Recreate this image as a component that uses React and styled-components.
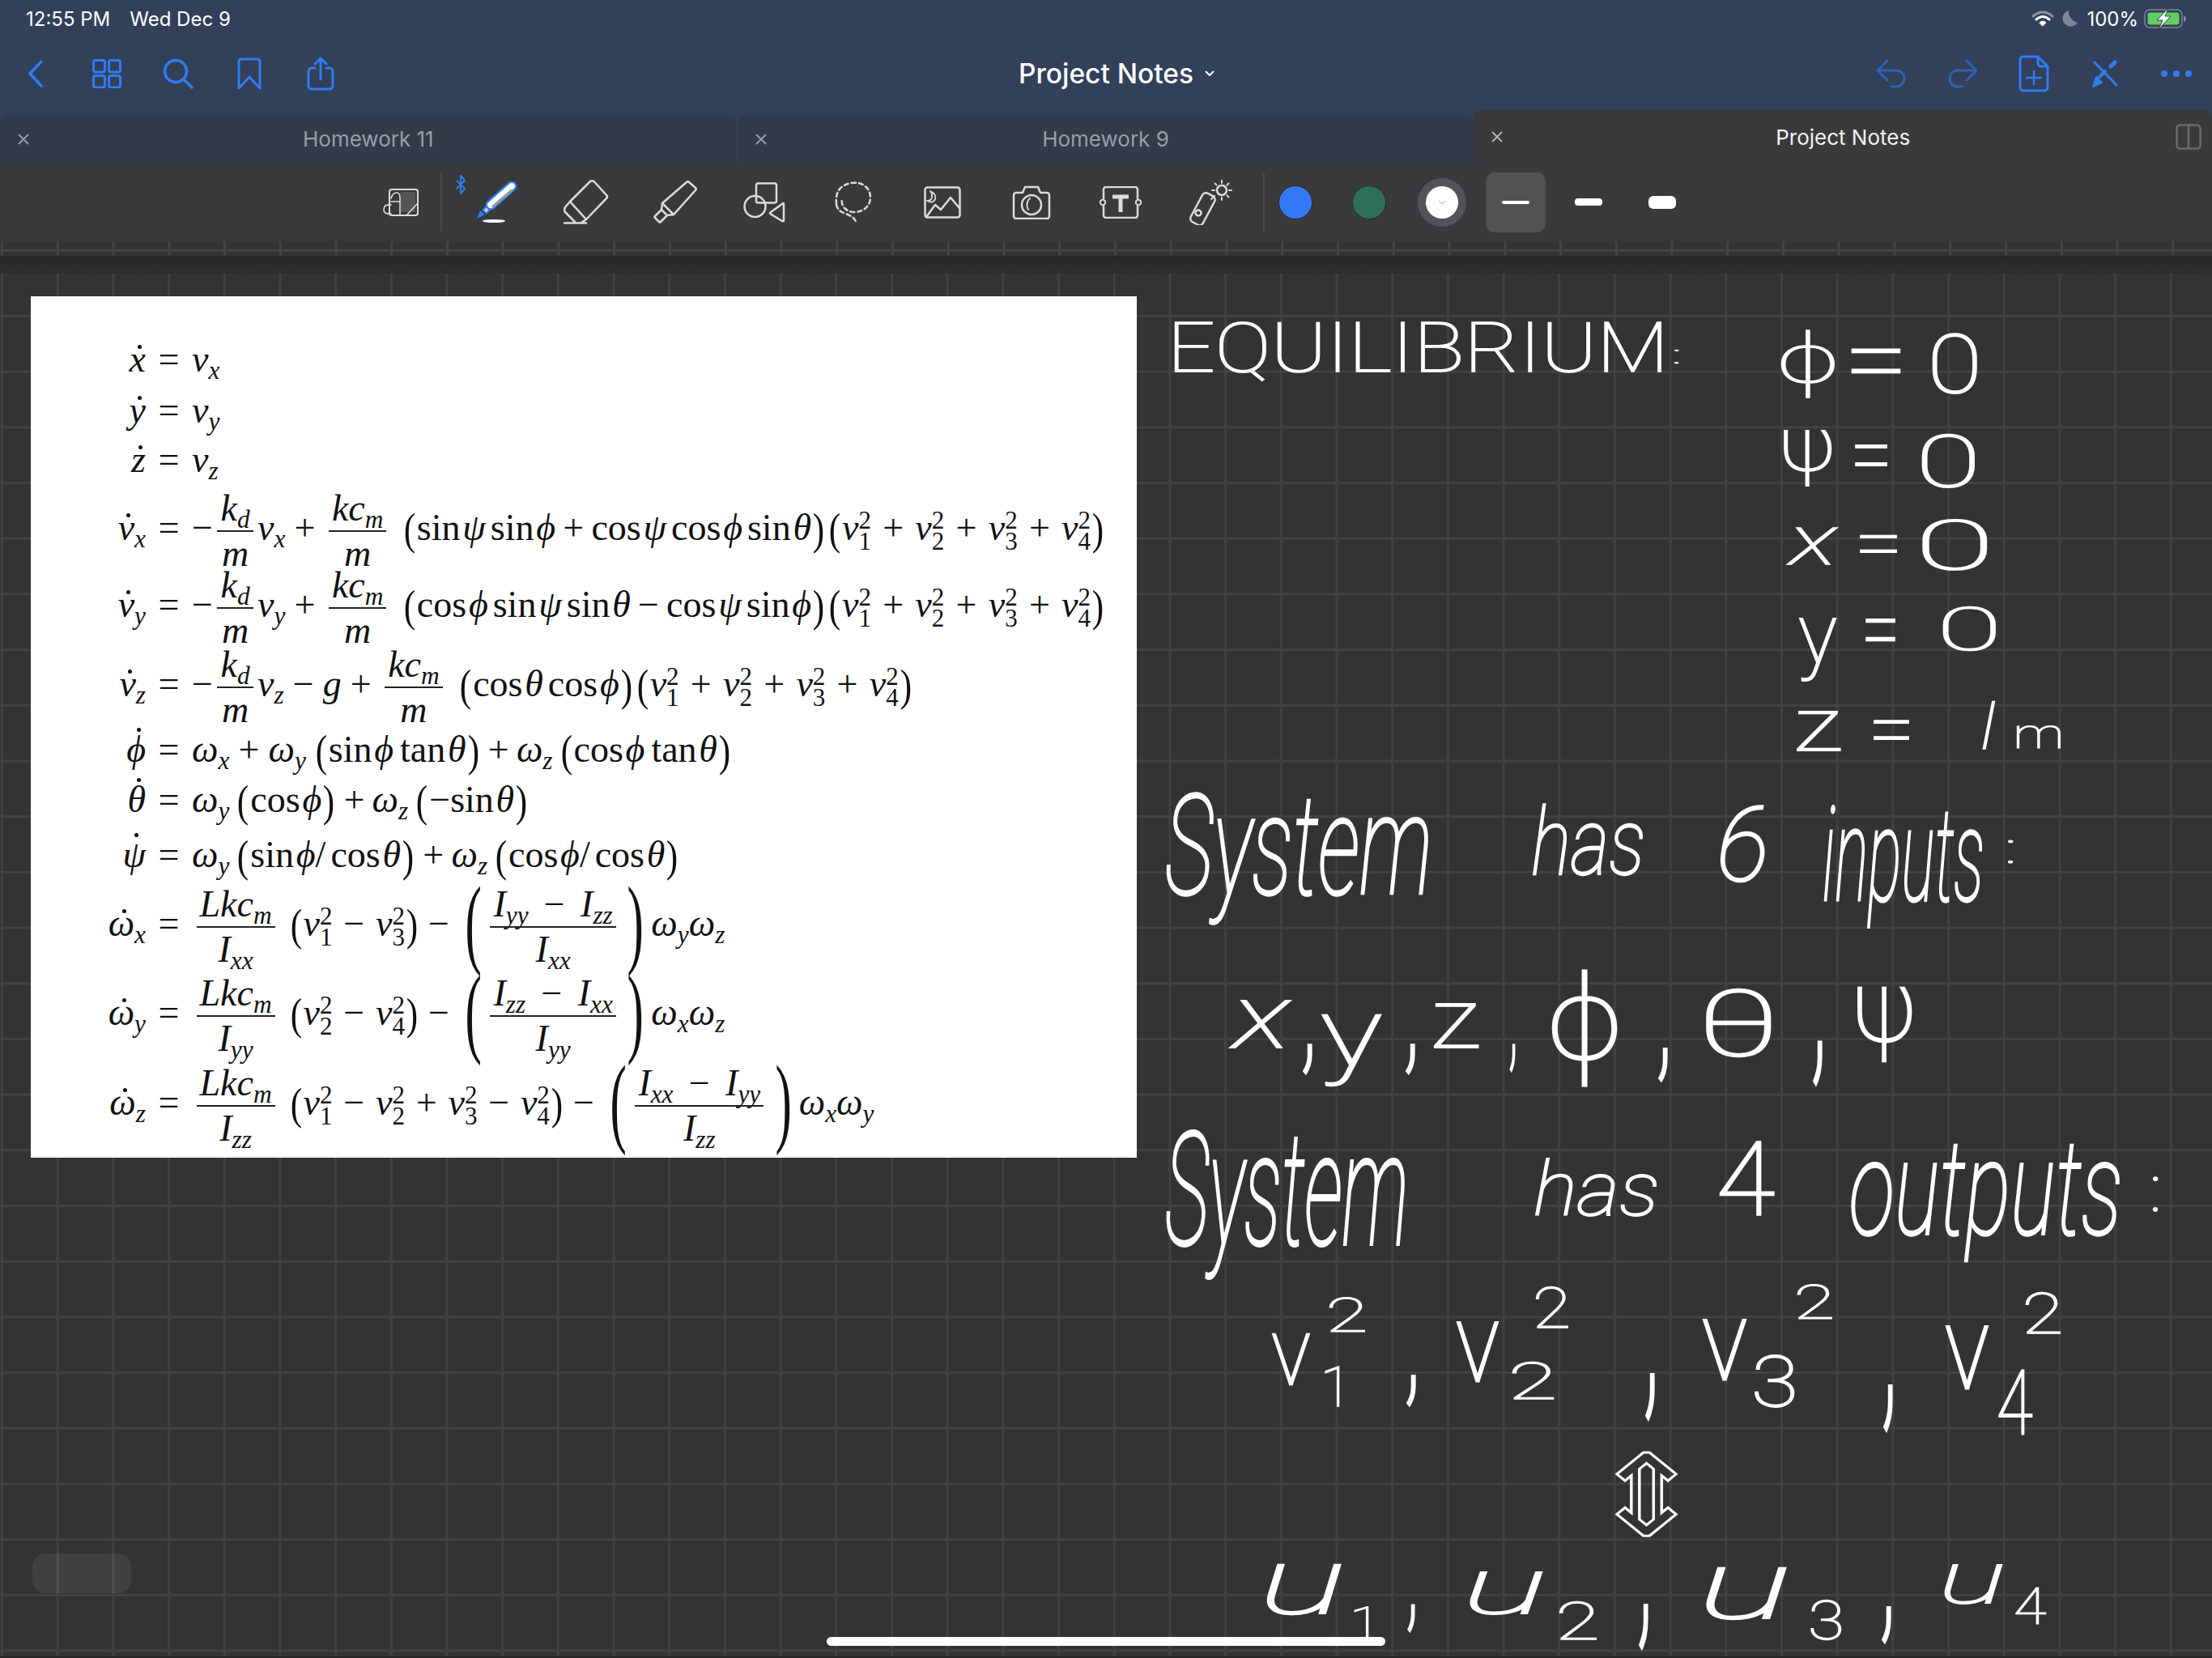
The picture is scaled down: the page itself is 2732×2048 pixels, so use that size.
import React, { useMemo } from "react";
import styled, { createGlobalStyle } from "styled-components";

const Global = createGlobalStyle`
  html, body { margin: 0; padding: 0; background: #333; }
  #root { width: 2732px; height: 2048px; }
`;

const BLUE = "#2f7cf2";
const Page = styled.div`
  position: relative; width: 2732px; height: 2048px; overflow: hidden;
  display: flex; flex-direction: column; font-family: Inter, "Liberation Sans", sans-serif; background: #333;
`;
const Status = styled.div`
  height: 46px; background: #334059; display: flex; align-items: center; justify-content: space-between;
  padding: 0 30px 0 32px; color: #fff; font-size: 24px;
`;
const StatusLeft = styled.div`display: flex; gap: 24px;`;
const StatusRight = styled.div`display: flex; align-items: center; gap: 10px;`;
const Nav = styled.div`
  height: 90px; background: #334059; display: grid; grid-template-columns: 1fr auto 1fr; align-items: center;
`;
const NavGroup = styled.div`display: flex; justify-content: ${p => p.$end ? "flex-end" : "flex-start"};`;
const NavCell = styled.div`width: 88px; height: 60px; display: flex; align-items: center; justify-content: center;`;
const Title = styled.div`
  color: #fff; font-size: 33.5px; font-weight: 500; display: flex; align-items: center; gap: 14px; padding-left: 26px;
`;
const TabBar = styled.div`height: 65px; background: #334059; display: flex;`;
const Tab = styled.div`
  position: relative; width: ${p => p.$w}px; margin-top: ${p => p.$active ? 0 : 6}px;
  background: ${p => p.$active ? "#3a3a3c" : "#323b4a"}; border-radius: 10px 10px 0 0;
  display: flex; align-items: center; justify-content: center; font-size: 26px;
  padding-top: ${p => p.$active ? 2 : 0}px;
  color: ${p => p.$active ? "#f2f2f2" : "#9a9ea6"};
  border-left: ${p => p.$sep ? "1px solid #3d4656" : "none"};
`;
const TabClose = styled.svg`position: absolute; left: 22px; top: 50%; margin-top: -7px; width: 14px; height: 14px;`;
const SplitIcon = styled.svg`position: absolute; right: 13px; top: 17px;`;
const Toolbar = styled.div`height: 97px; background: #3a3a3c; display: flex; align-items: center; padding-left: 439px;`;
const ToolCell = styled.div`position: relative; width: 110px; height: 97px; display: flex; align-items: center; justify-content: center;`;
const BtBadge = styled.svg`position: absolute; left: 4px; top: 15px;`;
const ToolSep = styled.div`width: 2px; height: 72px; background: #4a4a4c; margin: ${p => p.$m};`;
const SwatchCell = styled.div`width: 90.5px; display: flex; align-items: center; justify-content: center;`;
const Swatch = styled.div`
  width: 40px; height: 40px; border-radius: 50%; background: ${p => p.$c};
  box-shadow: ${p => p.$on ? "0 0 0 10px #545458" : "0 0 0 1px #2d2d2d"};
  display: flex; align-items: center; justify-content: center;
`;
const StrokeBtn = styled.div`
  width: 74px; height: 74px; border-radius: 11px; background: ${p => p.$on ? "#525255" : "transparent"};
  display: flex; align-items: center; justify-content: center;
`;
const StrokeBar = styled.div`width: 34px; height: ${p => p.$h}px; border-radius: ${p => p.$r}px; background: #fff;`;
const Strip = styled.div`
  height: 18px; background-color: #343434;
  background-image: linear-gradient(#444, #444), linear-gradient(90deg, #444 3px, transparent 3px);
  background-size: 100% 3px, 68.75px 100%; background-position: 0 10px, 1px 0; background-repeat: no-repeat, repeat-x;
`;
const Band = styled.div`height: 22px; background: linear-gradient(#272727, #2f2f2f);`;
const GridCanvas = styled.div`
  flex: 1; padding: 28px 0 0 38px; background-color: #333;
  background-image: linear-gradient(#424242 3px, transparent 3px), linear-gradient(90deg, #414141 3px, transparent 3px);
  background-size: 68.7px 68.7px; background-position: 0 51px, 1px 0; background-repeat: repeat;
`;
const EndLine = styled.div`position: absolute; left: 0; bottom: 0; width: 100%; height: 2px; background: #272727;`;
const Sheet = styled.div`
  width: 1366px; height: 1064px; background: #fff; color: #111; padding-top: 47px; box-sizing: border-box;
  font-family: "Liberation Serif", "DejaVu Serif", serif; font-size: 46px; overflow: hidden;
`;
const Row = styled.div`
  height: ${p => p.$h}px; line-height: ${p => p.$h}px; white-space: nowrap;
`;
const Lhs = styled.span`display: inline-block; width: 142px; text-align: right; line-height: 1;`;
const EqSign = styled.span`display: inline-block; width: 57px; text-align: center; line-height: 1;`;
const Mi = styled.i`font-style: italic;`;
const Sub = styled.sub`font-size: 0.68em; vertical-align: -0.28em; line-height: 0; font-style: italic;`;
const Dotted = styled.span`
  position: relative; display: inline-block; line-height: 1;
  &::before { content: ""; position: absolute; left: 52%; top: ${p => p.$t ?? -3}px; width: 5px; height: 5px; border-radius: 50%; background: #111; }
`;
const Op = styled.span`margin: 0 ${p => p.$m ?? 0.24}em;`;
const Fn = styled.span`margin: 0 ${p => p.$m ?? 0.06}em 0 0;`;
const Gap = styled.span`display: inline-block; width: ${p => p.$w}px;`;
const Par = styled.span`
  display: inline-block; font-size: ${p => p.$s ?? 54}px; line-height: 0; vertical-align: ${p => p.$v ?? "-0.09em"};
  transform: scaleX(0.8); font-weight: 400;
`;
const BigPar = styled.span`
  display: inline-block; width: 34px; text-align: center; font-size: 122px; line-height: 0; vertical-align: -0.2em; transform: scaleX(0.5);
`;
const Frac = styled.span`
  display: inline-flex; flex-direction: column; align-items: center; vertical-align: middle; margin: -30px 0.12em; line-height: 1;
`;
const Num = styled.span`padding: 0 4px 4px; white-space: nowrap;`;
const Den = styled.span`padding: 4px 4px 0; white-space: nowrap; border-top: 2px solid #222; align-self: stretch; text-align: center;`;
const Scripts = styled.span`
  display: inline-flex; flex-direction: column; vertical-align: middle; font-size: 31px; line-height: 26px; margin: -10px 0 -10px 0; text-align: left; font-style: normal;
`;
const Ink = styled.svg`position: absolute; left: 0; top: 0; width: 2732px; height: 2048px; pointer-events: none;`;
const InkText = styled.text`
  font-family: Roboto, "Noto Sans", sans-serif; font-style: ${p => p.$i === 1 ? "italic" : "normal"}; font-weight: 100; font-size: 100px;
  fill: ${p => p.$i === 2 ? "none" : "#fff"}; stroke: #fff; stroke-width: 2px;
`;
const Pill = styled.div`position: absolute; left: 40px; top: 1919px; width: 122px; height: 49px; border-radius: 16px; background: rgba(255, 255, 255, 0.07);`;
const Home = styled.div`position: absolute; left: 1021px; top: 2022px; width: 690px; height: 11px; border-radius: 6px; background: #fff;`;

const Ic = ({ w, h, c = BLUE, sw = 3, children }) => (
  <svg width={w} height={h} viewBox={`0 0 ${w} ${h}`} fill="none" stroke={c} strokeWidth={sw} strokeLinecap="round" strokeLinejoin="round">{children}</svg>
);
const TOOL = "#dcdcdc";
const WIDE = 0.3;
const SUM = 0.31;
const MID = 0.2;

const V = ({ s, p }) => <><Mi>v</Mi><Scripts><span>{p}</span><span>{s}</span></Scripts></>;
const VSum = () => (
  <><Par>(</Par><V s="1" p="2" /><Op $m={SUM}>+</Op><V s="2" p="2" /><Op $m={SUM}>+</Op><V s="3" p="2" /><Op $m={SUM}>+</Op><V s="4" p="2" /><Par>)</Par></>
);
const S = (x, n) => <Mi>{x}<Sub>{n}</Sub></Mi>;
const Kd = () => <Frac><Num>{S("k", "d")}</Num><Den><Mi>m</Mi></Den></Frac>;
const Kc = () => <><Frac><Num>{S("kc", "m")}</Num><Den><Mi>m</Mi></Den></Frac><Gap $w={14} /></>;
const L = (n) => <Frac><Num>{S("Lkc", "m")}</Num><Den>{S("I", n)}</Den></Frac>;
const R = ({ a, b, d }) => (
  <><BigPar>(</BigPar><Frac><Num>{S("I", a)}<Op $m={0.42}>−</Op>{S("I", b)}</Num><Den>{S("I", d)}</Den></Frac><BigPar>)</BigPar><Gap $w={4} /></>
);
const Eq = ({ h, l, children }) => (
  <Row $h={h}><Lhs>{l}</Lhs><EqSign>=</EqSign>{children}</Row>
);
const D = (x, t) => <Dotted $t={t}><Mi>{x}</Mi></Dotted>;

const INK = [
  ["EQUILIBRIUM", 1451, 397, 2051, 470], [":", 2068, 432, 2073, 449],
  ["ϕ", 2200, 409, 2265, 491], ["=", 2288, 432, 2346, 461], ["0", 2388, 412, 2441, 486],
  ["ψ", 2204, 531, 2262, 599], ["=", 2292, 550, 2330, 575], ["0", 2375, 536, 2438, 602],
  ["x", 2208, 652, 2269, 697, 1], ["=", 2298, 661, 2342, 682], ["0", 2376, 641, 2453, 704],
  ["y", 2223, 763, 2268, 841], ["=", 2305, 765, 2340, 791], ["0", 2401, 749, 2464, 804],
  ["z", 2220, 879, 2273, 927], ["=", 2315, 890, 2357, 913], ["l", 2449, 866, 2464, 925, 1], ["m", 2491, 897, 2545, 925],
  ["System", 1441, 980, 1764, 1140, 1], ["has", 1894, 993, 2029, 1081, 1], ["6", 2125, 996, 2179, 1089, 1], ["inputs", 2253, 995, 2448, 1146, 1], [":", 2480, 1039, 2486, 1066],
  ["x", 1520, 1236, 1594, 1294, 1], [",", 1610, 1290, 1620, 1326], ["y", 1634, 1253, 1706, 1341], [",", 1737, 1290, 1747, 1326], ["z", 1772, 1240, 1826, 1294], [",", 1865, 1290, 1871, 1323],
  ["ϕ", 1917, 1200, 1996, 1341], [",", 2049, 1296, 2059, 1336], ["θ", 2108, 1221, 2187, 1305], [",", 2240, 1288, 2250, 1341], ["ψ", 2295, 1219, 2361, 1311],
  ["System", 1441, 1397, 1735, 1578, 1], ["has", 1897, 1431, 2046, 1502, 1], ["4", 2125, 1411, 2191, 1502], ["outputs", 2286, 1412, 2618, 1558, 1], [":", 2659, 1454, 2665, 1496],
  ["v", 1572, 1648, 1617, 1710], ["2", 1642, 1602, 1685, 1645], ["1", 1637, 1688, 1654, 1737], [",", 1738, 1700, 1748, 1737],
  ["v", 1800, 1633, 1850, 1706], ["2", 1897, 1590, 1936, 1640], ["2", 1868, 1683, 1918, 1728], [",", 2033, 1698, 2043, 1754],
  ["v", 2104, 1630, 2156, 1704], ["2", 2220, 1587, 2262, 1629], ["3", 2168, 1674, 2216, 1738], [",", 2327, 1712, 2337, 1768],
  ["v", 2404, 1638, 2455, 1715], ["2", 2502, 1596, 2544, 1647], ["4", 2469, 1693, 2510, 1773],
  ["⇕", 1996, 1793, 2071, 1897, 2],
  ["u", 1565, 1933, 1656, 1994, 1], ["1", 1673, 1984, 1690, 2023], [",", 1739, 1982, 1747, 2015],
  ["u", 1816, 1942, 1905, 1994, 1], ["2", 1926, 1978, 1971, 2025], [",", 2025, 1983, 2035, 2037],
  ["u", 2108, 1937, 2206, 2000, 1], ["3", 2237, 1977, 2274, 2026], [",", 2325, 1985, 2335, 2029],
  ["u", 2402, 1933, 2473, 1981, 1], ["4", 2490, 1962, 2527, 2007],
];

function useInk() {
  return useMemo(() => {
    const ctx = document.createElement("canvas").getContext("2d");
    return INK.map(([t, x0, y0, x1, y1, it]) => {
      ctx.font = `${it === 1 ? "italic " : ""}100 100px Roboto, "Noto Sans", sans-serif`;
      const m = ctx.measureText(t);
      const bw = Math.max(1, m.actualBoundingBoxLeft + m.actualBoundingBoxRight);
      const bh = Math.max(1, m.actualBoundingBoxAscent + m.actualBoundingBoxDescent);
      const sx = (x1 - x0) / bw, sy = (y1 - y0) / bh;
      return { t, it, tf: `translate(${x0 + m.actualBoundingBoxLeft * sx} ${y0 + m.actualBoundingBoxAscent * sy}) scale(${sx} ${sy})` };
    });
  }, []);
}

export default function App() {
  const ink = useInk();
  return (
    <Page>
      <Global />
      <Status>
        <StatusLeft><span>12:55 PM</span><span>Wed Dec 9</span></StatusLeft>
        <StatusRight>
          <svg width="28" height="20" viewBox="0 0 28 20" fill="none" strokeLinecap="round">
            <path d="M2 7 Q14 -3 26 7" stroke="#8a93a3" strokeWidth="3" />
            <path d="M6 11 Q14 4 22 11" stroke="#fff" strokeWidth="3" />
            <path d="M10 15 Q14 11 18 15 L14 19 Z" fill="#fff" stroke="#fff" strokeWidth="1" />
          </svg>
          <svg width="20" height="22" viewBox="0 0 20 22"><path d="M8 1 A10 10 0 1 0 19 16 A14 14 0 0 1 8 1 Z" fill="#7d8696" /></svg>
          <span>100%</span>
          <svg width="54" height="26" viewBox="0 0 54 26" style={{ marginLeft: -3 }}>
            <rect x="1" y="2" width="46" height="22" rx="6" fill="none" stroke="#7d8696" strokeWidth="1.5" />
            <rect x="4.5" y="5.5" width="39" height="15" rx="3" fill="#63cd5f" />
            <path d="M49 9 Q52 10 52 13 Q52 16 49 17 Z" fill="#7d8696" />
            <path d="M30 0 L16 15 H23 L18 26 L33 10 H26 Z" fill="#fff" stroke="#334059" strokeWidth="1" />
          </svg>
        </StatusRight>
      </Status>
      <Nav>
        <NavGroup>
          <NavCell><Ic w={20} h={34} sw={3.5}><path d="M17 2 L3 17 L17 32" /></Ic></NavCell>
          <NavCell><Ic w={36} h={36}><rect x="1.5" y="1.5" width="14" height="14.5" rx="2.5" /><rect x="20.5" y="1.5" width="14" height="14.5" rx="2.5" /><rect x="1.5" y="20.5" width="14" height="14.5" rx="2.5" /><rect x="20.5" y="20.5" width="14" height="14.5" rx="2.5" /></Ic></NavCell>
          <NavCell><Ic w={38} h={38} sw={3.5}><circle cx="16" cy="16" r="13.5" /><path d="M26 26 L36 36" /></Ic></NavCell>
          <NavCell><Ic w={30} h={40}><path d="M2 38 V5 a3 3 0 0 1 3 -3 H25 a3 3 0 0 1 3 3 V38 L15 24 Z" /></Ic></NavCell>
          <NavCell><Ic w={34} h={42}><path d="M10 14 H6 a4 4 0 0 0 -4 4 V36 a4 4 0 0 0 4 4 H28 a4 4 0 0 0 4 -4 V18 a4 4 0 0 0 -4 -4 H24" /><path d="M17 28 V2 M10 9 L17 2 L24 9" /></Ic></NavCell>
        </NavGroup>
        <Title>
          <span>Project Notes</span>
          <svg width="12" height="8" viewBox="0 0 12 8" fill="none" stroke="#fff" strokeWidth="2" strokeLinecap="round" strokeLinejoin="round"><path d="M1.5 1.5 L6 6 L10.5 1.5" /></svg>
        </Title>
        <NavGroup $end>
          <NavCell><Ic w={38} h={38} c="#2d62ae"><path d="M14 3 L2 15 L14 27 M2 15 H25 a10 10 0 0 1 0 20 H19" /></Ic></NavCell>
          <NavCell><Ic w={38} h={38} c="#2d62ae"><path d="M24 3 L36 15 L24 27 M36 15 H13 a10 10 0 0 0 0 20 H19" /></Ic></NavCell>
          <NavCell><Ic w={38} h={46}><path d="M6 2 H24 L36 14 V40 a4 4 0 0 1 -4 4 H6 a4 4 0 0 1 -4 -4 V6 a4 4 0 0 1 4 -4 Z" /><path d="M24 2 V10 a4 4 0 0 0 4 4 H36" /><path d="M19 20 V36 M10 28 H28" strokeWidth="2.5" /></Ic></NavCell>
          <NavCell>
            <Ic w={32} h={34}>
              <path d="M3 3 L30 31" />
              <path d="M1 33 L5 21 L12 28 Z" fill={BLUE} strokeWidth="2" />
              <path d="M8 22 L17 13" strokeWidth="4" strokeLinecap="butt" />
              <path d="M23 8 L28 3" strokeWidth="5" />
            </Ic>
          </NavCell>
          <NavCell><Ic w={38} h={8} sw={0}><circle cx="4" cy="4" r="4" fill={BLUE} /><circle cx="19" cy="4" r="4" fill={BLUE} /><circle cx="34" cy="4" r="4" fill={BLUE} /></Ic></NavCell>
        </NavGroup>
      </Nav>
      <TabBar>
        <Tab $w={910}><TabClose viewBox="0 0 14 14" stroke="#9a9ea6" strokeWidth="1.8"><path d="M1 1 L13 13 M13 1 L1 13" /></TabClose>Homework 11</Tab>
        <Tab $w={910} $sep><TabClose viewBox="0 0 14 14" stroke="#9a9ea6" strokeWidth="1.8"><path d="M1 1 L13 13 M13 1 L1 13" /></TabClose>Homework 9</Tab>
        <Tab $w={912} $active><TabClose viewBox="0 0 14 14" stroke="#b5b5b7" strokeWidth="1.8"><path d="M1 1 L13 13 M13 1 L1 13" /></TabClose>Project Notes
          <SplitIcon width="32" height="32" viewBox="0 0 32 32" fill="none" stroke="#6a6a6c" strokeWidth="2.5"><rect x="1.5" y="1.5" width="29" height="29" rx="4" /><path d="M16 1.5 V30.5" /></SplitIcon>
        </Tab>
      </TabBar>
      <Toolbar>
        <ToolCell>
          <Ic w={46} h={36} c={TOOL} sw={2}>
            <path d="M22 5 H40 a2 2 0 0 1 2 2 V30 L24 30 V10 Q24 5 22 5 Z" fill="#555" stroke="none" />
            <rect x="10" y="2" width="35" height="32" rx="3" />
            <path d="M12 13 Q14 6 19 6 Q23 6 23 12 V33 M12 17 H23 M12 21 Q3 20 3 27 Q3 33 12 32 M32 33 L44 20" strokeWidth="1.6" />
          </Ic>
        </ToolCell>
        <ToolSep $m="0 13px 0 -5px" />
        <ToolCell>
          <BtBadge width="12" height="24" viewBox="0 0 12 24" fill="none" stroke={BLUE} strokeWidth="2" strokeLinejoin="round"><path d="M1 7 L11 17 L6 23 V1 L11 7 L1 17" /></BtBadge>
          <svg width="50" height="52" viewBox="0 0 50 52" fill="none" strokeLinecap="round">
            <path d="M17 29 L43 6" stroke={BLUE} strokeWidth="13" />
            <path d="M17 29 L43 6" stroke="#fff" strokeWidth="8" />
            <path d="M20 31 L43 11" stroke="#9a9a9a" strokeWidth="3" />
            <path d="M9 38 L14 33" stroke={BLUE} strokeWidth="8" strokeLinecap="butt" />
            <path d="M10 37 L13 34" stroke="#cfcfcf" strokeWidth="4" strokeLinecap="butt" />
            <path d="M0 46 L4 36 L10 41 Z" fill={BLUE} />
            <ellipse cx="21" cy="49" rx="14" ry="2" fill="#fff" />
          </svg>
        </ToolCell>
        <ToolCell>
          <Ic w={56} h={55} c={TOOL} sw={2.5}>
            <path d="M35 1.5 Q37 1 38.5 3 L53 19 Q55 21 53 23 L28 49 L8 27 L33 2 Z" />
            <path d="M8 27 L2 34 Q0 37 2 40 L14 52 M28 49 L22 53 M1 53.5 H28" />
          </Ic>
        </ToolCell>
        <ToolCell>
          <Ic w={54} h={54} c={TOOL} sw={2.5}>
            <path d="M41 2 Q42.5 0.5 44 2 L52 9 Q53.5 10.5 52 12 L25 42 L11 28 Z" />
            <path d="M11 28 L10 36 L2 44 Q1 45 2 46 L7 51 Q8 52 9 51 L17 43 L25 42 M10 36 L17 43" />
          </Ic>
        </ToolCell>
        <ToolCell>
          <Ic w={52} h={50} c={TOOL} sw={2.5}>
            <rect x="16" y="1.5" width="25" height="24" rx="2.5" />
            <circle cx="14.5" cy="30" r="13" />
            <path d="M50 27 Q50 25 48 27 L34 37 Q32 38 34 39.5 L48 48 Q50 49 50 47 Z" />
          </Ic>
        </ToolCell>
        <ToolCell>
          <Ic w={46} h={52} c={TOOL} sw={2.5}>
            <path d="M21 2 C34 0 44 8 44 20 C44 30 36 38 24 38 C14 38 7 30 9 21 M2 28 C0 12 8 4 21 2 M2 29 C3 33 5 36 9 38 C15 41 24 43 26 50" strokeDasharray="5 4" />
          </Ic>
        </ToolCell>
        <ToolCell>
          <Ic w={46} h={40} c={TOOL} sw={2.5}>
            <rect x="1.5" y="1.5" width="43" height="37" rx="3" />
            <path d="M8 6 Q16 10 14 16 Q11 22 4 18 Q9 18 10 14 Q11 10 8 6 Z" strokeWidth="1.8" />
            <path d="M3 38 L14 23 L21 29 L33 14 L44 27" />
          </Ic>
        </ToolCell>
        <ToolCell>
          <Ic w={48} h={42} c={TOOL} sw={2.5}>
            <path d="M5 9 H13 L16 2 H32 L35 9 H43 a3 3 0 0 1 3 3 V38 a3 3 0 0 1 -3 3 H5 a3 3 0 0 1 -3 -3 V12 a3 3 0 0 1 3 -3 Z" />
            <circle cx="24" cy="24" r="12" />
            <path d="M20 30 Q16 22 22 16" strokeWidth="1.8" />
          </Ic>
        </ToolCell>
        <ToolCell>
          <Ic w={52} h={40} c={TOOL} sw={2.5}>
            <path d="M5 15 V4 a3 3 0 0 1 3 -3 H44 a3 3 0 0 1 3 3 V15 M5 25 V36 a3 3 0 0 0 3 3 H44 a3 3 0 0 0 3 -3 V25" />
            <circle cx="4" cy="20" r="3.2" strokeWidth="2" /><circle cx="48" cy="20" r="3.2" strokeWidth="2" />
            <path d="M16 13 H36 M26 13 V32" strokeWidth="5" strokeLinecap="butt" />
          </Ic>
        </ToolCell>
        <ToolCell>
          <Ic w={56} h={56} c={TOOL} sw={2.5}>
            <rect x="11" y="16" width="17" height="40" rx="5" transform="rotate(28 19 36)" />
            <circle cx="14" cy="41" r="3.5" />
            <circle cx="43" cy="13" r="6" />
            <path d="M43 1 V4 M43 22 V25 M31 13 H34 M52 13 H55 M34.5 4.5 L36.5 6.5 M49.5 19.5 L51.5 21.5 M51.5 4.5 L49.5 6.5 M34 20 L30 24" strokeWidth="2" />
          </Ic>
        </ToolCell>
        <ToolSep $m="0 -7px 0 11px" />
        <SwatchCell><Swatch $c="#3478f6" /></SwatchCell>
        <SwatchCell><Swatch $c="#2f6f57" /></SwatchCell>
        <SwatchCell><Swatch $c="#fff" $on><svg width="10" height="6" viewBox="0 0 10 6" fill="none" stroke="#aaa" strokeWidth="1"><path d="M1 1 L5 5 L9 1" /></svg></Swatch></SwatchCell>
        <SwatchCell><StrokeBtn $on><StrokeBar $h={4} $r={2} /></StrokeBtn></SwatchCell>
        <SwatchCell><StrokeBtn><StrokeBar $h={9} $r={4} /></StrokeBtn></SwatchCell>
        <SwatchCell><StrokeBtn><StrokeBar $h={16} $r={6} /></StrokeBtn></SwatchCell>
      </Toolbar>
      <Strip />
      <Band />
      <GridCanvas>
        <Sheet>
          <Eq h={62} l={D("x", 5)}><Mi>v<Sub>x</Sub></Mi></Eq>
          <Eq h={64} l={D("y", 5)}><Mi>v<Sub>y</Sub></Mi></Eq>
          <Eq h={58} l={D("z", 5)}><Mi>v<Sub>z</Sub></Mi></Eq>
          <Eq h={110} l={<>{D("v", 5)}<Sub>x</Sub></>}>−<Kd /><Mi>v<Sub>x</Sub></Mi><Op>+</Op><Kc /><Par>(</Par><Fn>sin</Fn><Mi>ψ</Mi><Gap $w={6} /><Fn>sin</Fn><Mi>ϕ</Mi><Op $m={0.2}>+</Op><Fn>cos</Fn><Mi>ψ</Mi><Gap $w={6} /><Fn>cos</Fn><Mi>ϕ</Mi><Gap $w={6} /><Fn>sin</Fn><Mi>θ</Mi><Par>)</Par><Gap $w={2} /><VSum /></Eq>
          <Eq h={80} l={<>{D("v", 5)}<Sub>y</Sub></>}>−<Kd /><Mi>v<Sub>y</Sub></Mi><Op>+</Op><Kc /><Par>(</Par><Fn>cos</Fn><Mi>ϕ</Mi><Gap $w={6} /><Fn>sin</Fn><Mi>ψ</Mi><Gap $w={6} /><Fn>sin</Fn><Mi>θ</Mi><Op $m={0.2}>−</Op><Fn>cos</Fn><Mi>ψ</Mi><Gap $w={6} /><Fn>sin</Fn><Mi>ϕ</Mi><Par>)</Par><Gap $w={2} /><VSum /></Eq>
          <Eq h={116} l={<>{D("v", 5)}<Sub>z</Sub></>}>−<Kd /><Mi>v<Sub>z</Sub></Mi><Op>−</Op><Mi>g</Mi><Op>+</Op><Kc /><Par>(</Par><Fn>cos</Fn><Mi>θ</Mi><Gap $w={6} /><Fn>cos</Fn><Mi>ϕ</Mi><Par>)</Par><Gap $w={2} /><VSum /></Eq>
          <Eq h={40} l={D("ϕ", -4)}><Mi>ω<Sub>x</Sub></Mi><Op>+</Op><Mi>ω<Sub>y</Sub></Mi><Gap $w={10} /><Par>(</Par><Fn>sin</Fn><Mi>ϕ</Mi><Gap $w={8} /><Fn>tan</Fn><Mi>θ</Mi><Par>)</Par><Op $m={MID}>+</Op><Mi>ω<Sub>z</Sub></Mi><Gap $w={8} /><Par>(</Par><Fn>cos</Fn><Mi>ϕ</Mi><Gap $w={8} /><Fn>tan</Fn><Mi>θ</Mi><Par>)</Par></Eq>
          <Eq h={90} l={D("θ", -4)}><Mi>ω<Sub>y</Sub></Mi><Gap $w={8} /><Par>(</Par><Fn>cos</Fn><Mi>ϕ</Mi><Par>)</Par><Op $m={MID}>+</Op><Mi>ω<Sub>z</Sub></Mi><Gap $w={8} /><Par>(</Par>−<Fn>sin</Fn><Mi>θ</Mi><Par>)</Par></Eq>
          <Eq h={38} l={D("ψ", -4)}><Mi>ω<Sub>y</Sub></Mi><Gap $w={8} /><Par>(</Par><Fn>sin</Fn><Mi>ϕ</Mi>/<Gap $w={6} /><Fn>cos</Fn><Mi>θ</Mi><Par>)</Par><Op $m={MID}>+</Op><Mi>ω<Sub>z</Sub></Mi><Gap $w={8} /><Par>(</Par><Fn>cos</Fn><Mi>ϕ</Mi>/<Gap $w={6} /><Fn>cos</Fn><Mi>θ</Mi><Par>)</Par></Eq>
          <Eq h={140} l={<>{D("ω", 5)}<Sub>x</Sub></>}>{L("xx")} <Par>(</Par><V s="1" p="2" /><Op $m={WIDE}>−</Op><V s="3" p="2" /><Par>)</Par><Op>−</Op><R a="yy" b="zz" d="xx" /><Mi>ω<Sub>y</Sub>ω<Sub>z</Sub></Mi></Eq>
          <Eq h={80} l={<>{D("ω", 5)}<Sub>y</Sub></>}>{L("yy")} <Par>(</Par><V s="2" p="2" /><Op $m={WIDE}>−</Op><V s="4" p="2" /><Par>)</Par><Op>−</Op><R a="zz" b="xx" d="yy" /><Mi>ω<Sub>x</Sub>ω<Sub>z</Sub></Mi></Eq>
          <Eq h={142} l={<>{D("ω", 5)}<Sub>z</Sub></>}>{L("zz")} <Par>(</Par><V s="1" p="2" /><Op $m={WIDE}>−</Op><V s="2" p="2" /><Op $m={WIDE}>+</Op><V s="3" p="2" /><Op $m={WIDE}>−</Op><V s="4" p="2" /><Par>)</Par><Op>−</Op><R a="xx" b="yy" d="zz" /><Mi>ω<Sub>x</Sub>ω<Sub>y</Sub></Mi></Eq>
        </Sheet>
      </GridCanvas>
      <Pill />
      <Ink viewBox="0 0 2732 2048">
        {ink.map((k, i) => <InkText key={i} $i={k.it} transform={k.tf}>{k.t}</InkText>)}
      </Ink>
      <Home />
      <EndLine />
    </Page>
  );
}
